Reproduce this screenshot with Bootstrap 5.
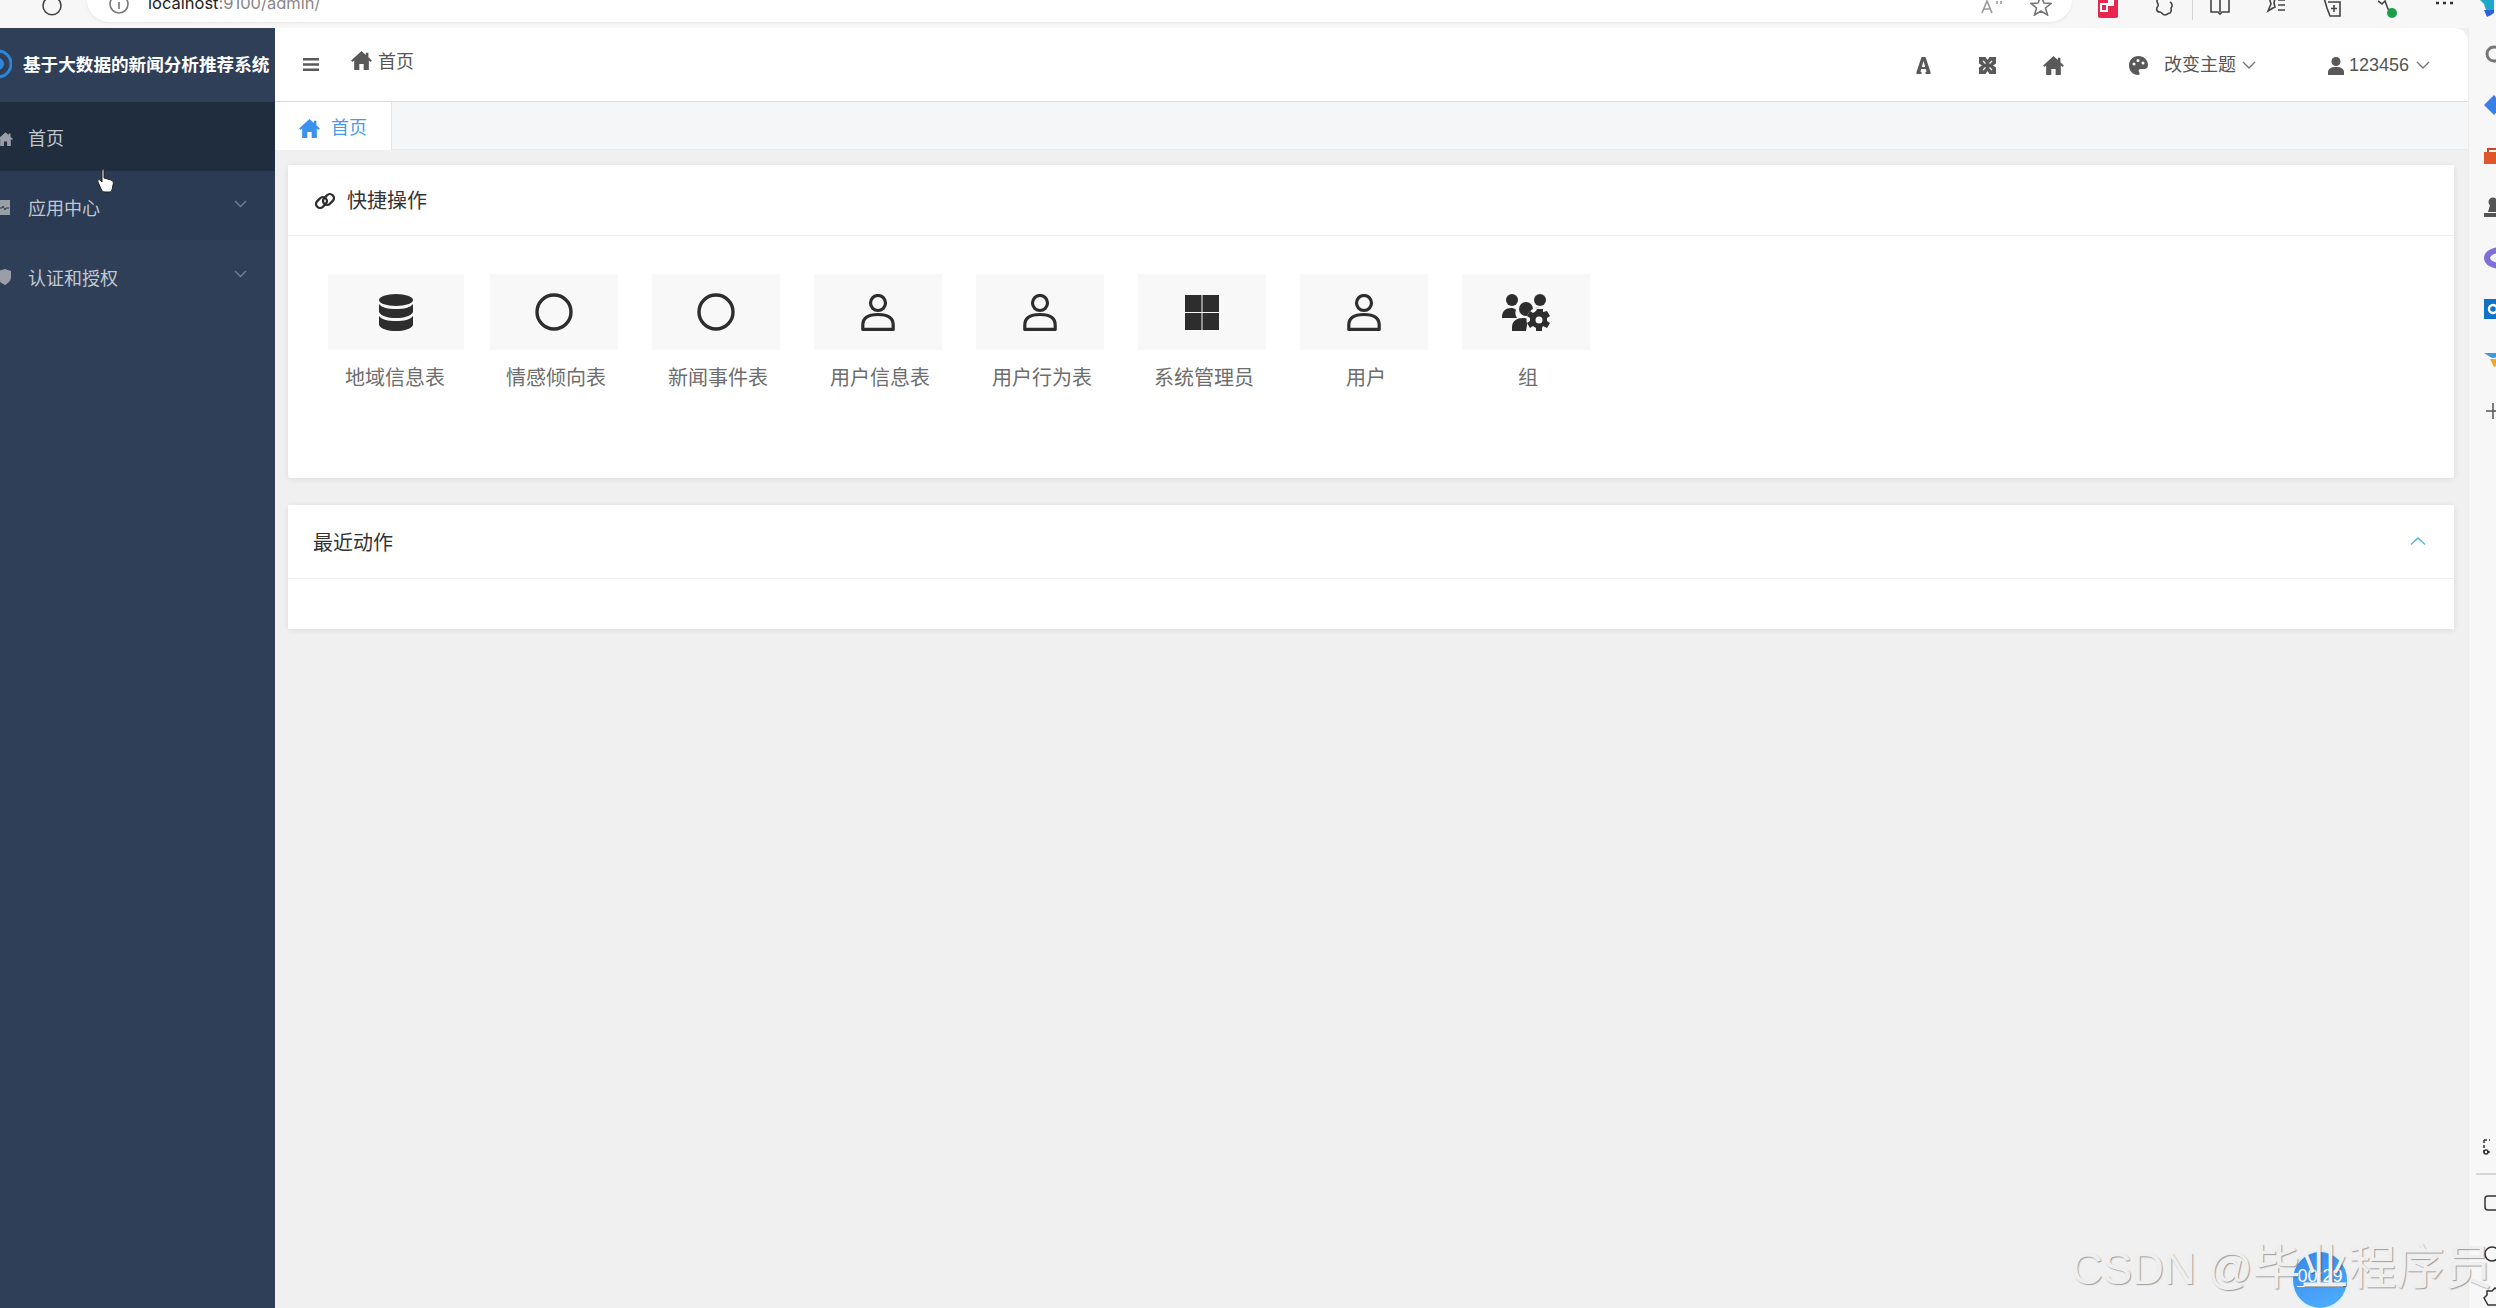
<!DOCTYPE html>
<html lang="zh-CN">
<head>
    <meta charset="UTF-8">
    <meta name="viewport" content="width=device-width, initial-scale=1.0">
    <title>首页</title>
    <link href="https://cdn.jsdelivr.net/npm/bootstrap@5.3.2/dist/css/bootstrap.min.css" rel="stylesheet">
    <style>
        html, body {
            height: 100%;
        }
        body {
            background-color: #f7f7f7;
            font-family: "Liberation Sans", "Noto Sans CJK SC", sans-serif;
            overflow: hidden;
            position: relative;
        }
        .chrome-bar {
            height: 28px;
            overflow: hidden;
            background: #f7f7f7;
        }
        .chrome-bar svg {
            flex: none;
            fill: none;
            stroke: #444;
            stroke-width: 1.6;
        }
        .addr-pill {
            width: 1985px;
            height: 22px;
            margin-left: 24px;
            padding: 0 20px 0 22px;
            background: #fff;
            border-radius: 0 0 22px 22px;
            box-shadow: 0 1px 3px rgba(0,0,0,.08);
        }
        .addr-text {
            font-family: "Inter", "Liberation Sans", sans-serif;
            font-size: 16.5px;
            line-height: 20px;
            margin: -7px 0 0 19px;
            color: #888;
        }
        .addr-text b {
            font-weight: 400;
            color: #222;
        }
        .tool-row {
            margin-left: 26px;
            gap: 36px;
        }
        .tool-sep {
            width: 1px;
            height: 20px;
            margin: 0 -19px 0 -18px;
            background: #d4d4d4;
        }
        .app-wrap {
            height: 1280px;
        }
        .side-menu {
            width: 275px;
            background: #2f3f58;
            overflow: hidden;
        }
        .side-brand {
            height: 74px;
            color: #fff;
            font-size: 17.6px;
            font-weight: 700;
            white-space: nowrap;
            padding-left: 23px;
        }
        .side-logo {
            position: absolute;
            left: -16px;
            top: 16px;
        }
        .side-row {
            height: 69px;
            color: #c3c8d0;
            font-size: 18px;
            padding: 7px 28px 0 28px;
        }
        .side-row.is-active {
            background: #202d3f;
            padding-top: 5px;
        }
        .side-row.is-dim {
            background: #2a3b53;
        }
        .side-row.is-tall {
            height: 71px;
        }
        .side-ic {
            position: absolute;
            left: -2px;
            top: 29px;
            fill: #9a9ea6;
        }
        .side-arrow {
            fill: none;
            stroke: #6f7d92;
            stroke-width: 1.5;
        }
        .main-col {
            width: 2193px;
            background: #f0f0f0;
        }
        .top-head {
            height: 74px;
            background: #fff;
            border-bottom: 1px solid #dcdcdc;
            border-radius: 0 14px 0 0;
            color: #555;
            font-size: 18px;
        }
        .top-head svg {
            fill: #595959;
            flex: none;
        }
        .head-right {
            padding: 2px 38px 0 0;
        }
        .head-line {
            fill: none !important;
            stroke: #777;
            stroke-width: 1.4;
        }
        .tab-strip {
            height: 48px;
            background: #f5f6f8;
            border-bottom: 1px solid #ebebeb;
        }
        .tab-item {
            width: 117px;
            height: 48px;
            background: #fff;
            border-right: 1px solid #e4e4e4;
            color: #4a9ae8;
            font-size: 18px;
            padding: 5px 0 0 24px;
        }
        .box-card {
            border: 0;
            border-radius: 3px;
            margin: 15px 14px 0 13px;
            box-shadow: 0 1px 6px rgba(0,0,0,.09);
        }
        .box-head {
            height: 71px;
            background: #fff;
            border-bottom: 1px solid #efefef;
            color: #333;
            font-size: 20px;
            padding: 2px 26px 0;
        }
        .box-tiles {
            height: 242px;
            padding: 38px 0 0 40px;
        }
        .tile-wrap {
            width: 162px;
        }
        .tile-first {
            width: 162px;
        }
        .tile-img {
            width: 128px;
            height: 76px;
            background: #f8f8f8;
        }
        .tile-first .tile-img {
            width: 136px;
        }
        .tile-img svg {
            fill: #2d2d2d;
        }
        .tile-name {
            width: 128px;
            margin-left: 2px;
            margin-top: 15px;
            line-height: 26px;
            font-size: 20px;
            color: #6d6d6d;
            text-align: center;
            white-space: nowrap;
        }
        .tile-first .tile-name {
            width: 136px;
            margin-left: -1px;
        }
        .box-empty {
            height: 50px;
        }
        .rail-col {
            width: 28px;
            background: #f7f7f7;
            border-left: 1px solid #ececec;
            overflow: hidden;
            grid-auto-rows: 51px;
            align-items: center;
            align-content: start;
        }
        .rail-col svg {
            margin-left: 15px;
        }
        .rail-low {
            position: absolute;
            right: 0;
            top: 1130px;
            width: 28px;
            height: 178px;
            overflow: hidden;
        }
        .water-mark {
            position: absolute;
            left: 2071px;
            top: 1236px;
            font-size: 44px;
            line-height: 64px;
            white-space: nowrap;
            color: #efefef;
            text-shadow: 1px 1px 1px rgba(0,0,0,.35);
        }
        .water-cjk {
            font-size: 48px;
        }
        .rec-dot {
            position: absolute;
            left: 2291px;
            top: 1250px;
            width: 58px;
            height: 60px;
            border-radius: 50%;
            background: linear-gradient(160deg, #3a86e8, #4fb0ff);
            border: 2px solid #dff1fb;
            color: #fff;
            font-size: 18px;
            line-height: 1;
            text-align: center;
            padding-top: 15px;
        }
        .rec-dot span {
            border-bottom: 1px solid #fff;
        }
        .hand-cursor {
            position: absolute;
            left: 97px;
            top: 169px;
        }
    </style>
</head>
<body>

<svg width="0" height="0" class="position-absolute">
    <defs>
        <symbol id="ic-home" viewBox="0 0 24 22"><path d="M12 0 0 11l1.500 1.700L3.500 11v11h6v-7h5v7h6V11l2 1.700L24 11l-4-3.700V2h-3v2.600z"/></symbol>
        <symbol id="ic-db" viewBox="0 0 34 37"><ellipse cx="17" cy="6" rx="17" ry="6"/><path d="M0 10c3 4 9 5 17 5s14-1 17-5v8c-2 4-9 6-17 6S2 22 0 18z"/><path d="M0 22c3 4 9 5 17 5s14-1 17-5v9c-2 4-9 6-17 6S2 35 0 31z"/></symbol>
        <symbol id="ic-user" viewBox="0 0 34 37"><circle cx="17" cy="9" r="7.500" fill="none" stroke="#2d2d2d" stroke-width="3.200"/><path d="M1.800 35.400V31c0-7 5-10.500 15.200-10.500S32.200 24 32.200 31v4.400z" fill="none" stroke="#2d2d2d" stroke-width="3.200" stroke-linejoin="round"/></symbol>
        <symbol id="ic-group" viewBox="0 0 48 37"><circle cx="10" cy="6" r="6"/><circle cx="38" cy="6" r="6"/><path d="M0 23c0-6 4-9 9-9 2 0 4 .5 5 2-1 2-1 5 1 8H0z"/><circle cx="24" cy="15" r="7"/><path d="M10 37v-4c0-6 5-9 11-9 2 0 4 .5 5 1l-2 12z"/><path d="M33 14c4-1 9 0 11 4v3h-8z"/><circle cx="37" cy="26" r="12.500" fill="#f8f8f8"/><path d="M35 15h6v3l4-1 3 5-3 2v3l3 2-3 5-4-2-1 2v3h-6v-3l-3-2-3 2-3-5 3-2v-3l-3-2 3-5 3 2 3-2z"/><circle cx="37" cy="26" r="3.500" fill="#f8f8f8"/></symbol>
    </defs>
</svg>

<div class="chrome-bar d-flex align-items-start">
    <svg width="22" height="22" viewBox="0 0 22 22" style="margin:-6px 0 0 41px"><path d="M5 5a9 9 0 1 0 12 0"/></svg>
    <div class="addr-pill d-flex align-items-start justify-content-end position-relative">
        <div class="d-flex align-items-start me-auto">
            <svg width="20" height="20" viewBox="0 0 20 20" style="margin-top:-6px;stroke:#777"><circle cx="10" cy="10" r="9"/><path d="M10 8v7"/></svg>
            <div class="addr-text"><b>localhost</b>:9100/admin/</div>
        </div>
        <svg width="24" height="16" viewBox="0 0 24 16" style="stroke:#999;margin-right:26px"><path d="M2 13 7 1l5 12M4 9h6M17 1v3M21 1v3"/></svg>
        <svg width="22" height="16" viewBox="0 0 22 16" style="stroke:#777"><path d="M11-4l3 7 7 .5-5.500 4.500 2 7L11 11l-6.500 4 2-7L1 3.500 8 3z"/></svg>
    </div>
    <div class="tool-row d-flex align-items-start">
        <svg width="20" height="18" viewBox="0 0 20 18" style="stroke:none"><rect y="-3" width="20" height="21" rx="2" fill="#e8264f"/><rect x="3" y="4" width="6" height="7" fill="none" stroke="#fff" stroke-width="2"/><rect x="10" y="0" width="6" height="6" fill="#fff"/></svg>
        <svg width="20" height="16" viewBox="0 0 20 16"><path d="M4-2C1 2 5 3 4 6 2 8 2 12 6 12c2 0 2 3 5 3 2 0 3-2 5-2 2-1 1-4 1-5 2-2 1-5-1-6"/></svg>
        <div class="tool-sep"></div>
        <svg width="20" height="16" viewBox="0 0 20 16"><path d="M1-2v14h7l2 2 2-2h7V-2M10-2v14"/></svg>
        <svg width="20" height="16" viewBox="0 0 20 16"><path d="M3-3l2 7-3 7 5-3 2-1-1-4 1-5M12 0h7M12 5h7M12 10h7"/></svg>
        <svg width="20" height="18" viewBox="0 0 20 18"><path d="M2-2l3 10 3 8h10V2H6M12 5v7M9 8.500h6"/></svg>
        <svg width="20" height="19" viewBox="0 0 20 19"><path d="M0 1l4 3 3-3 3 8 3 2"/><circle cx="14" cy="13" r="5" fill="#1f9e4a" stroke="none"/></svg>
        <svg width="20" height="8" viewBox="0 0 20 8" style="stroke:#333;stroke-width:2.500"><path d="M2 3h3M9 3h3M16 3h3"/></svg>
        <svg width="14" height="18" viewBox="0 0 14 18" style="stroke:none;margin-left:-10px"><path d="M0 0h14v12l-4 4-3-3-3-9z" fill="#1ea7c9"/><path d="M4 10l3 7 7-4v-3z" fill="#2a62d8"/></svg>
    </div>
</div>

<div class="app-wrap d-flex">
    <aside class="side-menu flex-shrink-0">
        <div class="side-brand d-flex align-items-center position-relative">
            <svg class="side-logo" width="28" height="40" viewBox="0 0 28 40"><circle cx="14" cy="20" r="13" fill="none" stroke="#2f86d8" stroke-width="3"/><circle cx="14" cy="20" r="6" fill="#2f86d8"/></svg>
            基于大数据的新闻分析推荐系统
        </div>
        <div class="side-row is-active d-flex align-items-center position-relative">
            <svg class="side-ic" width="15" height="16"><use href="#ic-home"/></svg>
            首页
        </div>
        <div class="side-row is-dim d-flex align-items-center justify-content-between position-relative">
            <svg class="side-ic" width="14" height="15" viewBox="0 0 14 15"><path d="M0 0h12v15H0z"/><path d="M2 8h2l1-2 2 4 1-2h3" fill="none" stroke="#2a3b53"/></svg>
            <span>应用中心</span>
            <svg class="side-arrow" width="13" height="8" viewBox="0 0 13 8" style="margin-bottom:10px"><path d="M1 1l5.500 5.500L12 1"/></svg>
        </div>
        <div class="side-row is-tall d-flex align-items-center justify-content-between position-relative">
            <svg class="side-ic" width="13" height="16" viewBox="0 0 13 16"><path d="M0 2 7 0l6 2v6c0 4-3 6-6 8-4-2-7-4-7-8z"/></svg>
            <span>认证和授权</span>
            <svg class="side-arrow" width="13" height="8" viewBox="0 0 13 8" style="margin-bottom:10px"><path d="M1 1l5.500 5.500L12 1"/></svg>
        </div>
    </aside>

    <div class="main-col flex-shrink-0">
        <header class="top-head d-flex align-items-center justify-content-between">
            <div class="d-flex align-items-center">
                <svg width="16" height="15" viewBox="0 0 16 15" style="margin-left:28px"><path d="M0 1h16v2.500H0zM0 6.250h16v2.500H0zM0 11.500h16V14H0z"/></svg>
                <svg class="mb-2" width="21" height="19" style="margin-left:32px"><use href="#ic-home"/></svg>
                <span class="mb-1" style="margin-left:6px">首页</span>
            </div>
            <div class="head-right d-flex align-items-center">
                <svg width="15" height="17" viewBox="0 0 14 17"><path d="M5 0h4l5 15v2H9v-2h1l-.700-3H4.700L4 15h1v2H0v-2zM7 4 5.300 10h3.400z" fill-rule="evenodd"/></svg>
                <svg width="17" height="17" viewBox="0 0 17 17" style="margin-left:48px"><path d="M0 0h6.500L8.500 3l2-3H17v6.500L14 8.500l3 2V17h-6.500l-2-3-2 3H0v-6.500l3-2-3-2z"/><path d="M4 4l2.500 2.500M13 4l-2.500 2.500M4 13l2.500-2.500M13 13l-2.500-2.500" stroke="#fff" stroke-width="1.300"/></svg>
                <svg width="21" height="19" style="margin-left:47px"><use href="#ic-home"/></svg>
                <svg width="19" height="19" viewBox="0 0 19 19" style="margin-left:65px"><path d="M9.500 0C4 0 0 4 0 9.500S4 19 9 19c2 0 2-2 1-3-1-2 0-3 2-3h3c2.500 0 4-1.500 4-4C19 4 15 0 9.500 0z"/><circle cx="5" cy="8" r="1.500" fill="#fff"/><circle cx="9" cy="4.500" r="1.500" fill="#fff"/><circle cx="14" cy="7" r="1.500" fill="#fff"/></svg>
                <span class="ms-3">改变主题</span>
                <svg class="head-line" width="14" height="9" viewBox="0 0 14 9" style="margin-left:6px"><path d="M1 1l6 6 6-6"/></svg>
                <svg width="16" height="18" viewBox="0 0 16 18" style="margin-left:72px"><circle cx="8" cy="4.500" r="4.500"/><path d="M0 18v-3c0-3 3-5 8-5s8 2 8 5v3z"/></svg>
                <span style="margin-left:5px">123456</span>
                <svg class="head-line" width="14" height="9" viewBox="0 0 14 9" style="margin-left:7px"><path d="M1 1l6 6 6-6"/></svg>
            </div>
        </header>

        <div class="tab-strip">
            <div class="tab-item d-flex align-items-center">
                <svg width="21" height="19" fill="#3a91ee"><use href="#ic-home"/></svg>
                <span style="margin-left:11px">首页</span>
            </div>
        </div>

        <div class="card box-card">
            <div class="box-head d-flex align-items-center">
                <svg width="22" height="20" viewBox="0 0 22 20" fill="none" stroke="#2d2d2d" stroke-width="2.400"><rect x="1.500" y="7.500" width="12" height="8" rx="4" transform="rotate(-45 7.500 11.500)"/><rect x="8.500" y="4.500" width="12" height="8" rx="4" transform="rotate(-45 14.500 8.500)"/></svg>
                <span style="margin-left:11px">快捷操作</span>
            </div>
            <div class="box-tiles d-flex" id="tiles"></div>
        </div>

        <div class="card box-card" style="margin-top:27px">
            <div class="box-head d-flex align-items-center justify-content-between" style="height:74px;padding-left:25px;padding-right:28px">
                <span>最近动作</span>
                <svg class="mb-1" width="16" height="10" viewBox="0 0 16 10" fill="none" stroke="#5bb4d8" stroke-width="1.500"><path d="M1 8.500 8 2l7 6.500"/></svg>
            </div>
            <div class="box-empty bg-white"></div>
        </div>
    </div>

    <div class="rail-col flex-grow-1 d-grid">
        <svg width="18" height="18" viewBox="0 0 18 18" fill="none" stroke="#777" stroke-width="3"><circle cx="10" cy="9" r="7"/></svg>
        <svg width="18" height="20" viewBox="0 0 18 20" fill="#3a7fe6"><path d="M10 0 0 10l10 10 8-10z"/></svg>
        <svg width="18" height="16" viewBox="0 0 18 16" fill="#e0562a"><path d="M0 4h18v12H0z"/><path d="M4 4V1h10v3" fill="none" stroke="#c9471f" stroke-width="2"/></svg>
        <svg width="18" height="20" viewBox="0 0 18 20" fill="#555"><circle cx="9" cy="5" r="4.500"/><path d="M6 8h6l2 7H4zM0 20v-4h18v4z"/></svg>
        <svg width="18" height="22" viewBox="0 0 18 22" fill="none" stroke="#7f6fd6" stroke-width="6"><path d="M18 3C8 3 3 7 3 11s5 8 15 8"/></svg>
        <svg width="18" height="20" viewBox="0 0 18 20" fill="#0f72c4"><path d="M0 0h18v20H0z"/><circle cx="9" cy="10" r="4" fill="none" stroke="#fff" stroke-width="2.400"/></svg>
        <svg width="18" height="14" viewBox="0 0 18 14" fill="#3b9ae0"><path d="M0 0h18v4L8 5z"/><path d="M6 6h12v4l-8 4z" fill="#eea92b"/></svg>
        <svg width="14" height="16" viewBox="0 0 14 16" fill="none" stroke="#555" stroke-width="1.500" style="margin-left:17px"><path d="M7 0v16M0 8h14"/></svg>
    </div>
</div>

<div class="rail-low">
    <svg width="28" height="178" viewBox="0 0 28 178" fill="none" stroke="#333" stroke-width="1.500"><path d="M16 10h6M16 10v12h6" stroke-dasharray="3 2"/><circle cx="18" cy="22" r="2"/><path d="M8 44h20" stroke="#ccc"/><rect x="17" y="66" width="14" height="14" rx="3"/><circle cx="24" cy="124" r="7"/><path d="M16 168l3-3v-4h5l3-3 5 3v14h-12z"/></svg>
</div>

<svg class="hand-cursor" width="18" height="24" viewBox="0 0 18 24"><path d="M5 1c1-1 2 0 2 1v7l7 2c2 1 3 2 2 5l-1 5c-1 2-2 2-4 2H8c-2 0-3-1-4-3L1 13c-1-2 1-3 2-2l2 2z" fill="#fff" stroke="#222"/></svg>
<div class="rec-dot"><span>00:29</span></div>
<div class="water-mark">CSDN @<span class="water-cjk">毕业程序员</span></div>

<script src="https://cdn.jsdelivr.net/npm/bootstrap@5.3.2/dist/js/bootstrap.bundle.min.js"></script>
<script>
    var tiles = [
        {name: "地域信息表", icon: '<svg width="34" height="37"><use href="#ic-db"/></svg>'},
        {name: "情感倾向表", icon: circleIcon()},
        {name: "新闻事件表", icon: circleIcon()},
        {name: "用户信息表", icon: userIcon()},
        {name: "用户行为表", icon: userIcon()},
        {name: "系统管理员", icon: '<svg width="34" height="35" viewBox="0 0 34 35"><path d="M0 0h16.500v17H0zM17.500 0H34v17H17.500zM0 18h16.500v17H0zM17.500 18H34v17H17.500z"/></svg>'},
        {name: "用户", icon: userIcon()},
        {name: "组", icon: '<svg width="48" height="37"><use href="#ic-group"/></svg>'}
    ];

    function circleIcon() {
        return '<svg width="38" height="38" viewBox="0 0 38 38"><circle cx="19" cy="19" r="17" fill="none" stroke="#2d2d2d" stroke-width="3.400"/></svg>';
    }

    function userIcon() {
        return '<svg width="34" height="37"><use href="#ic-user"/></svg>';
    }

    for (let i = 0; i < tiles.length; i++) {
        let wrap = document.createElement("div");
        wrap.className = i === 0 ? "tile-wrap tile-first" : "tile-wrap";
        wrap.innerHTML = '<div class="tile-img d-flex align-items-center justify-content-center">' + tiles[i].icon + '</div>' +
            '<div class="tile-name">' + tiles[i].name + '</div>';
        document.getElementById("tiles").appendChild(wrap);
    }
</script>
</body>
</html>
